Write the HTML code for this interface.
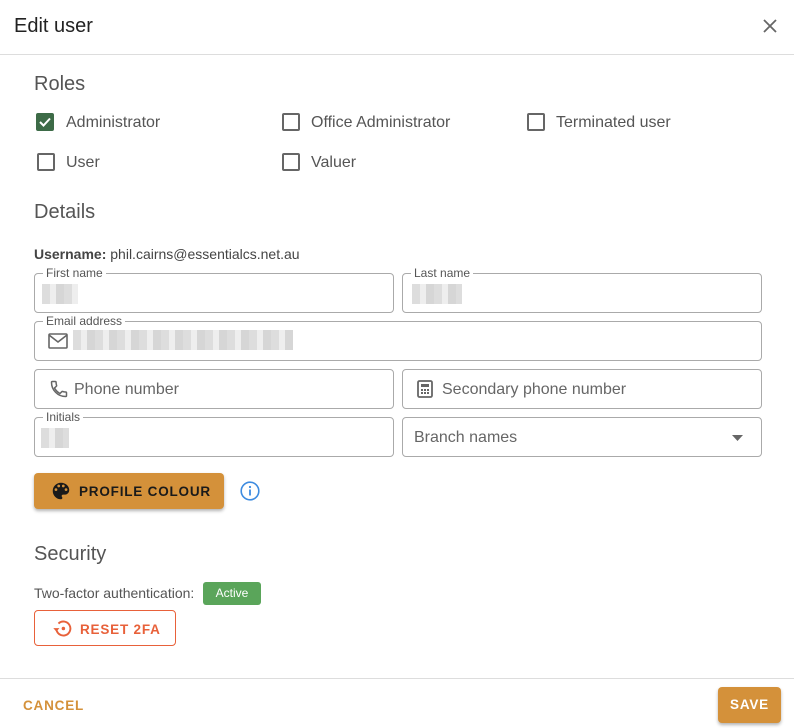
<!DOCTYPE html><html><head><style>
*{box-sizing:border-box;margin:0;padding:0}
body{width:794px;height:728px;background:#fff;font-family:"Liberation Sans",sans-serif;color:#333;position:relative;overflow:hidden}
.a{position:absolute}
.h{font-size:20px;color:#555}
.cb{position:absolute;width:18px;height:18px;border:2px solid #666;border-radius:2px}
.lbl{position:absolute;font-size:16px;color:#555}
.f{position:absolute;border:1px solid #aaa;border-radius:4px;height:40px}
.fl{position:absolute;top:-8px;left:8px;background:#fff;padding:0 3px;font-size:12px;color:#555;line-height:14px}
.ph{position:absolute;top:11px;font-size:16px;color:#666}
.blur{position:absolute;background:repeating-linear-gradient(90deg,#ddd 0 8px,#eee 8px 14px,#d6d6d6 14px 22px);height:20px}
.bt{font-size:13.5px;font-weight:bold;letter-spacing:0.8px}
</style></head><body>
<div class="a" style="left:14px;top:15px;font-size:20px;color:#222">Edit user</div>
<svg class="a" style="left:762px;top:18px" width="16" height="16" viewBox="0 0 16 16"><path d="M2 2L14 14M14 2L2 14" stroke="#666" stroke-width="1.8"/></svg>
<div class="a" style="left:0;top:54px;width:794px;height:1px;background:#ddd"></div>
<div class="a h" style="left:34px;top:73px">Roles</div>
<div class="cb" style="left:36px;top:113px;background:#3d6b47;border-color:#3d6b47"><svg width="14" height="14" viewBox="0 0 14 14" style="position:absolute;left:0;top:0"><path d="M2 7l3.5 3.5L12 3.5" stroke="#fff" stroke-width="2" fill="none"/></svg></div>
<div class="lbl" style="left:66px;top:114px">Administrator</div>
<div class="cb" style="left:282px;top:113px"></div><div class="lbl" style="left:311px;top:114px">Office Administrator</div>
<div class="cb" style="left:527px;top:113px"></div><div class="lbl" style="left:556px;top:114px">Terminated user</div>
<div class="cb" style="left:37px;top:153px"></div><div class="lbl" style="left:66px;top:154px">User</div>
<div class="cb" style="left:282px;top:153px"></div><div class="lbl" style="left:311px;top:154px">Valuer</div>
<div class="a h" style="left:34px;top:201px">Details</div>
<div class="a" style="left:34px;top:246px;font-size:14px;color:#444"><b>Username:</b> phil.cairns@essentialcs.net.au</div>
<div class="f" style="left:34px;top:273px;width:360px"><div class="fl">First name</div><div class="blur" style="left:7px;top:10px;width:36px"></div></div>
<div class="f" style="left:402px;top:273px;width:360px"><div class="fl">Last name</div><div class="blur" style="left:9px;top:10px;width:50px"></div></div>
<div class="f" style="left:34px;top:321px;width:728px"><div class="fl">Email address</div>
<svg class="a" style="left:13px;top:11px" width="20" height="16" viewBox="0 0 20 16"><rect x="1" y="1" width="18" height="14" rx="1" fill="none" stroke="#666" stroke-width="1.6"/><path d="M1 2l9 7 9-7" fill="none" stroke="#666" stroke-width="1.6"/></svg>
<div class="blur" style="left:38px;top:8px;width:220px"></div></div>
<div class="f" style="left:34px;top:369px;width:360px">
<svg class="a" style="left:14px;top:9px" width="20" height="20" viewBox="0 0 24 24"><path d="M6.6 10.8c1.4 2.8 3.8 5.1 6.6 6.6l2.2-2.2c.3-.3.7-.4 1-.2 1.1.4 2.3.6 3.6.6.6 0 1 .4 1 1V20c0 .6-.4 1-1 1C10.6 21 3 13.4 3 4c0-.6.4-1 1-1h3.5c.6 0 1 .4 1 1 0 1.3.2 2.5.6 3.6.1.3 0 .7-.2 1z" fill="none" stroke="#666" stroke-width="1.8"/></svg>
<div class="ph" style="left:39px">Phone number</div></div>
<div class="f" style="left:402px;top:369px;width:360px">
<svg class="a" style="left:13px;top:10px" width="18" height="18" viewBox="0 0 18 18"><rect x="2" y="1" width="14" height="16" rx="1.5" fill="none" stroke="#666" stroke-width="1.8"/><rect x="5" y="4" width="8" height="3" fill="#666"/><g fill="#666"><rect x="5" y="9" width="2" height="2"/><rect x="8" y="9" width="2" height="2"/><rect x="11" y="9" width="2" height="2"/><rect x="5" y="12" width="2" height="2"/><rect x="8" y="12" width="2" height="2"/><rect x="11" y="12" width="2" height="2"/></g></svg>
<div class="ph" style="left:39px">Secondary phone number</div></div>
<div class="f" style="left:34px;top:417px;width:360px"><div class="fl">Initials</div><div class="blur" style="left:6px;top:10px;width:28px"></div></div>
<div class="f" style="left:402px;top:417px;width:360px"><div class="ph" style="left:11px">Branch names</div>
<svg class="a" style="left:329px;top:17px" width="12" height="6"><path d="M0 0h11L5.5 6z" fill="#666"/></svg></div>
<div class="a" style="left:34px;top:473px;width:190px;height:36px;background:#d4913a;border-radius:4px;box-shadow:0 2px 3px rgba(0,0,0,.3)">
<svg class="a" style="left:16px;top:7px" width="22" height="22" viewBox="0 0 24 24"><path d="M12 3a9 9 0 000 18c.8 0 1.5-.7 1.5-1.5 0-.4-.2-.7-.4-1-.2-.3-.4-.6-.4-1 0-.8.7-1.5 1.5-1.5H16a5 5 0 005-5c0-4.4-4-8-9-8zM6.5 12a1.5 1.5 0 110-3 1.5 1.5 0 010 3zm3-4a1.5 1.5 0 110-3 1.5 1.5 0 010 3zm5 0a1.5 1.5 0 110-3 1.5 1.5 0 010 3zm3 4a1.5 1.5 0 110-3 1.5 1.5 0 010 3z" fill="#1a1a1a"/></svg>
<div class="a bt" style="left:45px;top:11px;color:#1a1a1a">PROFILE COLOUR</div></div>
<svg class="a" style="left:240px;top:481px" width="20" height="20" viewBox="0 0 20 20"><circle cx="10" cy="10" r="8.8" fill="none" stroke="#3d8be0" stroke-width="1.6"/><rect x="9.1" y="8.5" width="1.8" height="6" fill="#3d8be0"/><circle cx="10" cy="6" r="1.1" fill="#3d8be0"/></svg>
<div class="a h" style="left:34px;top:543px">Security</div>
<div class="a" style="left:34px;top:585px;font-size:14px;color:#555">Two-factor authentication:</div>
<div class="a" style="left:203px;top:582px;width:58px;height:23px;background:#5aa55a;border-radius:3px;color:#fff;font-size:12px;text-align:center;line-height:23px">Active</div>
<div class="a" style="left:34px;top:610px;width:142px;height:36px;border:1px solid #e8613a;border-radius:4px">
<svg class="a" style="left:17px;top:7px" width="21" height="21" viewBox="0 0 24 24"><path d="M5 12a8 8 0 102.4-5.7" fill="none" stroke="#e8613a" stroke-width="2.2"/><path d="M1.5 11.5h7L5 15.5z" fill="#e8613a"/><circle cx="13" cy="12" r="2" fill="#e8613a"/></svg>
<div class="a bt" style="left:45px;top:11px;color:#e8613a">RESET 2FA</div></div>
<div class="a" style="left:0;top:678px;width:794px;height:1px;background:#ddd"></div>
<div class="a bt" style="left:23px;top:698px;color:#d4913a">CANCEL</div>
<div class="a bt" style="left:718px;top:687px;width:63px;height:36px;background:#d4913a;border-radius:4px;box-shadow:0 2px 3px rgba(0,0,0,.3);color:#fff;text-align:center;line-height:36px">SAVE</div>
</body></html>
